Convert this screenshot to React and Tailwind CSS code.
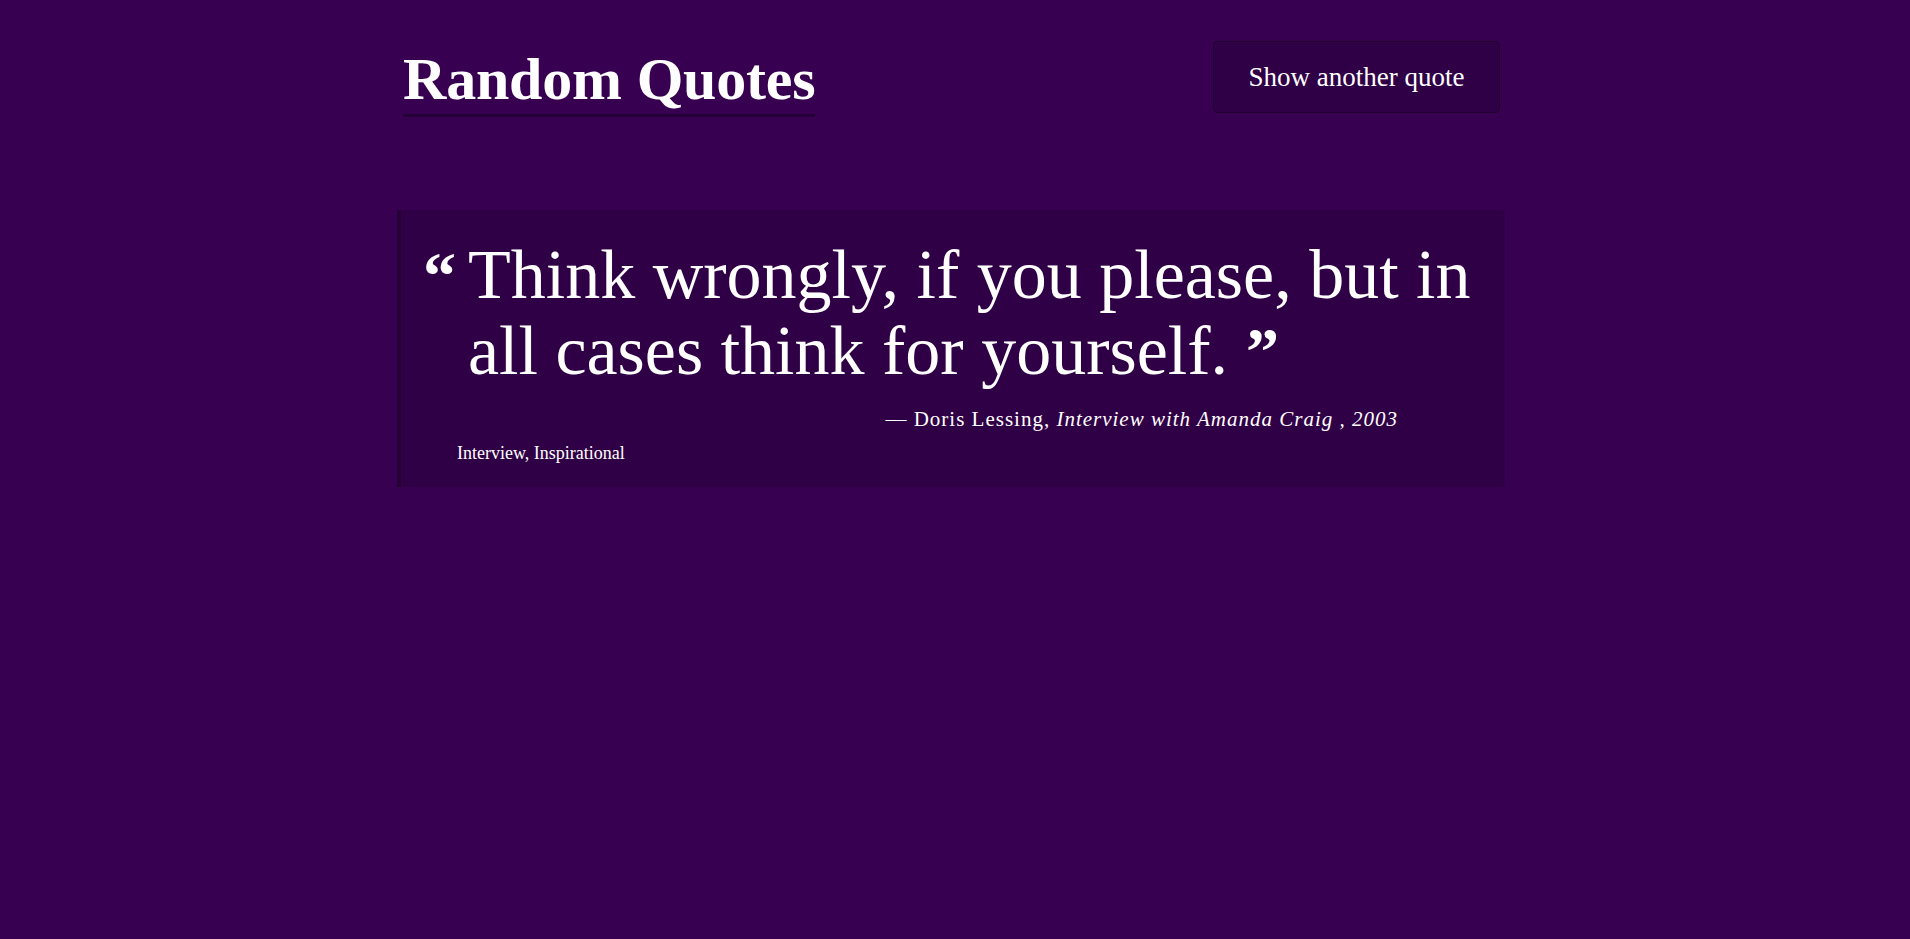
const quote = {
  text: 'Think wrongly, if you please, but in all cases think for yourself.',
  author: 'Doris Lessing',
  source: 'Interview with Amanda Craig',
  year: '2003',
  tags: ['Interview', 'Inspirational'],
};

const App = () => {
  return (
    <div className="min-h-screen bg-[#380050] text-white font-['Liberation_Serif',serif]">
      <div className="mx-auto w-[1116px]">
        {/* Header */}
        <header className="flex justify-between items-start pl-[6px] pr-[13px] pt-[41px]">
          <h1 className="mt-1 text-[60px] leading-[69px] font-bold tracking-[-0.2px] border-b-[3px] border-[#250038]">
            Random Quotes
          </h1>
          <button className="w-[287px] h-[72px] bg-[#2f0046] border border-[#1f0030] rounded-sm text-[27px] text-white">
            Show another quote
          </button>
        </header>

        {/* Quote */}
        <blockquote className="mt-[93px] w-[1108px] bg-[#300046] border-l-4 border-[#240036] pl-[22px] pr-[21px] pt-[27px] pb-[22px]">
          <div className="flex">
            <span className="w-[45px] h-[40px] shrink-0 text-[66px] leading-[66px] font-bold mt-[6px]">“</span>
            <p className="text-[70px] leading-[76px] after:content-['”'] after:inline-block after:align-top after:h-[76px] after:ml-[18px] after:text-[66px] after:leading-[76px] after:font-bold">
              {quote.text}
            </p>
          </div>
          <p className="mt-4 pr-[86px] text-right text-[21px] leading-[28px] tracking-[1px]">
            — {quote.author}, <cite className="italic">{quote.source} , {quote.year}</cite>
          </p>
          <p className="mt-2 ml-[34px] text-[18px] leading-[24px]">{quote.tags.join(', ')}</p>
        </blockquote>
      </div>
    </div>
  );
};

export default App;
